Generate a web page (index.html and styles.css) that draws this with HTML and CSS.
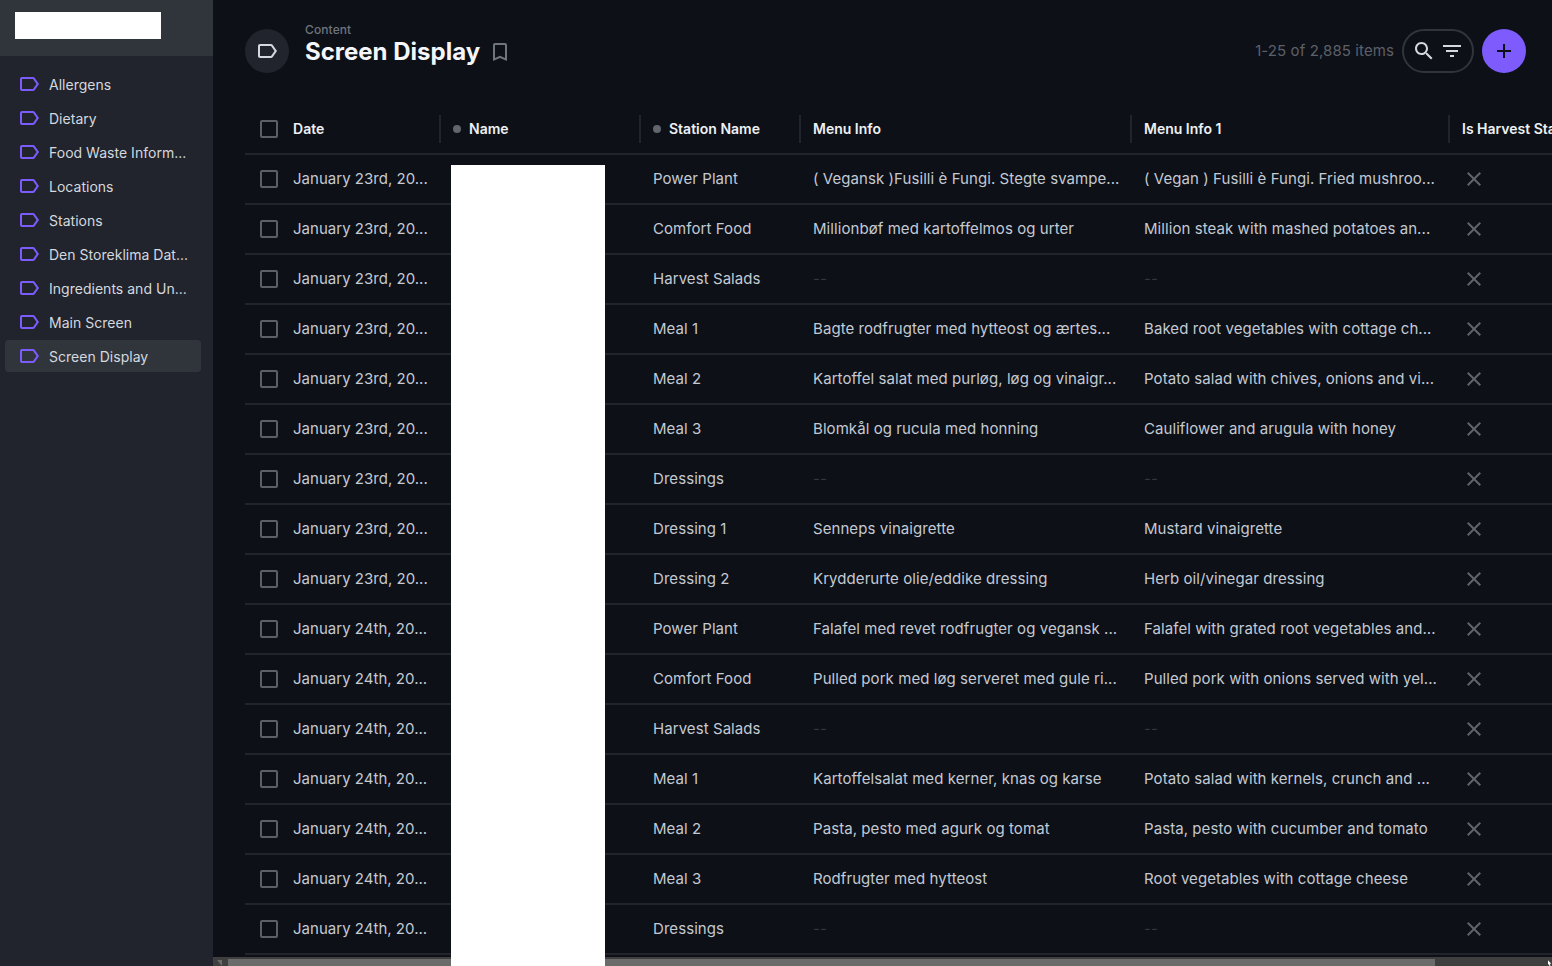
FILE: index.html
```html
<!DOCTYPE html>
<html lang="en">
<head>
<meta charset="utf-8">
<title>Screen Display</title>
<link rel="stylesheet" href="styles.css">
</head>
<body>
<svg class="defs" width="0" height="0" aria-hidden="true">
  <symbol id="i-label" viewBox="0 0 24 24"><path d="M17.63 5.84C17.27 5.33 16.67 5 16 5L5 5.01C3.9 5.01 3 5.9 3 7v10c0 1.1.9 1.99 2 1.99L16 19c.67 0 1.27-.33 1.63-.84L22 12l-4.37-6.16zM16 17H5V7h11l3.55 5L16 17z"/></symbol>
  <symbol id="i-close" viewBox="0 0 24 24"><path d="M19 6.41L17.59 5 12 10.59 6.41 5 5 6.41 10.59 12 5 17.59 6.41 19 12 13.41 17.59 19 19 17.59 13.41 12z"/></symbol>
</svg>
<div class="app">
  <aside class="sidebar">
    <div class="brand"><div class="logo"></div></div>
    <nav class="nav">
      <a class="nav-item"><svg class="nav-icon"><use href="#i-label"/></svg><span>Allergens</span></a>
      <a class="nav-item"><svg class="nav-icon"><use href="#i-label"/></svg><span>Dietary</span></a>
      <a class="nav-item"><svg class="nav-icon"><use href="#i-label"/></svg><span>Food Waste Inform...</span></a>
      <a class="nav-item"><svg class="nav-icon"><use href="#i-label"/></svg><span>Locations</span></a>
      <a class="nav-item"><svg class="nav-icon"><use href="#i-label"/></svg><span>Stations</span></a>
      <a class="nav-item"><svg class="nav-icon"><use href="#i-label"/></svg><span>Den Storeklima Dat...</span></a>
      <a class="nav-item"><svg class="nav-icon"><use href="#i-label"/></svg><span>Ingredients and Un...</span></a>
      <a class="nav-item"><svg class="nav-icon"><use href="#i-label"/></svg><span>Main Screen</span></a>
      <a class="nav-item active"><svg class="nav-icon"><use href="#i-label"/></svg><span>Screen Display</span></a>
    </nav>
  </aside>
  <main class="main">
    <header class="topbar">
      <div class="avatar"><svg class="avatar-icon"><use href="#i-label"/></svg></div>
      <div class="titles">
        <div class="crumb">Content</div>
        <div class="title-row">
          <h1 class="title">Screen Display</h1>
          <svg class="bookmark" viewBox="0 0 24 24"><path d="M17 3H7c-1.1 0-1.99.9-1.99 2L5 21l7-3 7 3V5c0-1.1-.9-2-2-2zm0 15l-5-2.18L7 18V5h10v13z"/></svg>
        </div>
      </div>
      <div class="actions">
        <span class="count">1-25 of 2,885 items</span>
        <div class="tools">
          <svg class="tool" viewBox="0 0 24 24"><path d="M15.5 14h-.79l-.28-.27C15.41 12.59 16 11.11 16 9.5 16 5.91 13.09 3 9.5 3S3 5.91 3 9.5 5.91 16 9.5 16c1.61 0 3.09-.59 4.23-1.57l.27.28v.79l5 4.99L20.49 19l-4.99-5zm-6 0C7.01 14 5 11.99 5 9.5S7.01 5 9.5 5 14 7.01 14 9.5 11.99 14 9.5 14z"/></svg>
          <svg class="tool" viewBox="0 0 24 24"><path d="M10 18h4v-2h-4v2zM3 6v2h18V6H3zm3 7h12v-2H6v2z"/></svg>
        </div>
        <button class="add"><svg class="add-icon" viewBox="0 0 24 24"><path d="M19 13h-6v6h-2v-6H5v-2h6V5h2v6h6v2z"/></svg></button>
      </div>
    </header>
    <section class="table-wrap">
      <div class="table">
        <div class="row head">
          <div class="cell c-date"><span class="check"></span><span>Date</span></div>
          <div class="cell c-name sep"><span class="dot"></span><span>Name</span></div>
          <div class="cell c-station sep"><span class="dot"></span><span>Station Name</span></div>
          <div class="cell sep"><span>Menu Info</span></div>
          <div class="cell sep"><span>Menu Info 1</span></div>
          <div class="cell sep"><span>Is Harvest Station</span></div>
        </div>
        <div class="row"><div class="cell c-date"><span class="check"></span><span>January 23rd, 20...</span></div><div class="cell"></div><div class="cell">Power Plant</div><div class="cell">( Vegansk )Fusilli è Fungi. Stegte svampe...</div><div class="cell">( Vegan ) Fusilli è Fungi. Fried mushroo...</div><div class="cell"><svg class="x"><use href="#i-close"/></svg></div></div>
        <div class="row"><div class="cell c-date"><span class="check"></span><span>January 23rd, 20...</span></div><div class="cell"></div><div class="cell">Comfort Food</div><div class="cell">Millionbøf med kartoffelmos og urter</div><div class="cell">Million steak with mashed potatoes an...</div><div class="cell"><svg class="x"><use href="#i-close"/></svg></div></div>
        <div class="row"><div class="cell c-date"><span class="check"></span><span>January 23rd, 20...</span></div><div class="cell"></div><div class="cell">Harvest Salads</div><div class="cell nil">--</div><div class="cell nil">--</div><div class="cell"><svg class="x"><use href="#i-close"/></svg></div></div>
        <div class="row"><div class="cell c-date"><span class="check"></span><span>January 23rd, 20...</span></div><div class="cell"></div><div class="cell">Meal 1</div><div class="cell">Bagte rodfrugter med hytteost og ærtes...</div><div class="cell">Baked root vegetables with cottage ch...</div><div class="cell"><svg class="x"><use href="#i-close"/></svg></div></div>
        <div class="row"><div class="cell c-date"><span class="check"></span><span>January 23rd, 20...</span></div><div class="cell"></div><div class="cell">Meal 2</div><div class="cell">Kartoffel salat med purløg, løg og vinaigr...</div><div class="cell">Potato salad with chives, onions and vi...</div><div class="cell"><svg class="x"><use href="#i-close"/></svg></div></div>
        <div class="row"><div class="cell c-date"><span class="check"></span><span>January 23rd, 20...</span></div><div class="cell"></div><div class="cell">Meal 3</div><div class="cell">Blomkål og rucula med honning</div><div class="cell">Cauliflower and arugula with honey</div><div class="cell"><svg class="x"><use href="#i-close"/></svg></div></div>
        <div class="row"><div class="cell c-date"><span class="check"></span><span>January 23rd, 20...</span></div><div class="cell"></div><div class="cell">Dressings</div><div class="cell nil">--</div><div class="cell nil">--</div><div class="cell"><svg class="x"><use href="#i-close"/></svg></div></div>
        <div class="row"><div class="cell c-date"><span class="check"></span><span>January 23rd, 20...</span></div><div class="cell"></div><div class="cell">Dressing 1</div><div class="cell">Senneps vinaigrette</div><div class="cell">Mustard vinaigrette</div><div class="cell"><svg class="x"><use href="#i-close"/></svg></div></div>
        <div class="row"><div class="cell c-date"><span class="check"></span><span>January 23rd, 20...</span></div><div class="cell"></div><div class="cell">Dressing 2</div><div class="cell">Krydderurte olie/eddike dressing</div><div class="cell">Herb oil/vinegar dressing</div><div class="cell"><svg class="x"><use href="#i-close"/></svg></div></div>
        <div class="row"><div class="cell c-date"><span class="check"></span><span>January 24th, 20...</span></div><div class="cell"></div><div class="cell">Power Plant</div><div class="cell">Falafel med revet rodfrugter og vegansk ...</div><div class="cell">Falafel with grated root vegetables and...</div><div class="cell"><svg class="x"><use href="#i-close"/></svg></div></div>
        <div class="row"><div class="cell c-date"><span class="check"></span><span>January 24th, 20...</span></div><div class="cell"></div><div class="cell">Comfort Food</div><div class="cell">Pulled pork med løg serveret med gule ri...</div><div class="cell">Pulled pork with onions served with yel...</div><div class="cell"><svg class="x"><use href="#i-close"/></svg></div></div>
        <div class="row"><div class="cell c-date"><span class="check"></span><span>January 24th, 20...</span></div><div class="cell"></div><div class="cell">Harvest Salads</div><div class="cell nil">--</div><div class="cell nil">--</div><div class="cell"><svg class="x"><use href="#i-close"/></svg></div></div>
        <div class="row"><div class="cell c-date"><span class="check"></span><span>January 24th, 20...</span></div><div class="cell"></div><div class="cell">Meal 1</div><div class="cell">Kartoffelsalat med kerner, knas og karse</div><div class="cell">Potato salad with kernels, crunch and ...</div><div class="cell"><svg class="x"><use href="#i-close"/></svg></div></div>
        <div class="row"><div class="cell c-date"><span class="check"></span><span>January 24th, 20...</span></div><div class="cell"></div><div class="cell">Meal 2</div><div class="cell">Pasta, pesto med agurk og tomat</div><div class="cell">Pasta, pesto with cucumber and tomato</div><div class="cell"><svg class="x"><use href="#i-close"/></svg></div></div>
        <div class="row"><div class="cell c-date"><span class="check"></span><span>January 24th, 20...</span></div><div class="cell"></div><div class="cell">Meal 3</div><div class="cell">Rodfrugter med hytteost</div><div class="cell">Root vegetables with cottage cheese</div><div class="cell"><svg class="x"><use href="#i-close"/></svg></div></div>
        <div class="row"><div class="cell c-date"><span class="check"></span><span>January 24th, 20...</span></div><div class="cell"></div><div class="cell">Dressings</div><div class="cell nil">--</div><div class="cell nil">--</div><div class="cell"><svg class="x"><use href="#i-close"/></svg></div></div>
      </div>
    </section>
    <div class="hscroll">
      <span class="arrow"></span>
      <div class="thumb"></div>
    </div>
    <div class="redact"></div>
    <svg class="cursor" viewBox="0 0 6 8"><path d="M0 0l5 5H2.5L4 8H2L.8 5.5 0 6.5z"/></svg>
  </main>
</div>
</body>
</html>
```

FILE: styles.css
```css
* { box-sizing: border-box; }
html, body { margin: 0; height: 100%; overflow: hidden; }
body {
  font-family: Inter, "Noto Sans", sans-serif;
  font-size: 14px;
  background: #0d1017;
  color: #c4cad3;
}
.defs { position: absolute; }
.app { display: flex; height: 966px; }

.sidebar { width: 213px; flex: none; background: #21242c; display: flex; flex-direction: column; }
.brand { height: 56px; background: #30353c; padding: 12px 0 0 15px; }
.logo { width: 146px; height: 27px; background: #fff; }
.nav { padding: 12px 12px 0 5px; display: flex; flex-direction: column; gap: 2px; }
.nav-item { height: 32px; display: flex; align-items: center; padding-left: 12px; gap: 8px; border-radius: 4px; color: #d4d8df; white-space: nowrap; letter-spacing: .02px; }
.nav-item.active { background: #30353c; }
.nav-icon { width: 24px; height: 24px; fill: #7c5cfc; flex: none; }

.main { flex: 1; min-width: 0; display: flex; flex-direction: column; position: relative; }
.topbar { height: 105px; flex: none; display: flex; align-items: flex-start; padding: 29px 26px 0 32px; }
.avatar { width: 44px; height: 44px; border-radius: 50%; background: #21242c; display: flex; align-items: center; justify-content: center; flex: none; }
.avatar-icon { width: 24px; height: 24px; fill: #d4d8df; }
.titles { margin-left: 16px; margin-top: -6px; }
.crumb { font-size: 12px; font-weight: 500; line-height: 14px; color: #6f747d; letter-spacing: .1px; }
.title-row { display: flex; align-items: center; gap: 10px; }
.title { margin: 0; font-size: 24px; line-height: 30px; font-weight: 700; color: #f4f6f9; }
.bookmark { width: 24px; height: 24px; fill: #6f747d; flex: none; margin-left: -2px; }
.actions { margin-left: auto; display: flex; align-items: center; }
.count { color: #5c6069; font-size: 15px; letter-spacing: .1px; margin-right: 8px; padding-bottom: 2px; }
.tools { width: 72px; height: 44px; border: 2px solid #30353c; border-radius: 22px; display: flex; align-items: center; padding-left: 8px; gap: 4px; }
.tool { width: 24px; height: 24px; fill: #d4d8df; flex: none; }
.add { width: 44px; height: 44px; margin-left: 8px; border: 0; padding: 0; border-radius: 50%; background: #7e5bfd; display: flex; align-items: center; justify-content: center; }
.add-icon { width: 24px; height: 24px; fill: #0d1017; }

.table-wrap { flex: 1; min-height: 0; overflow: hidden; padding-left: 32px; }
.table { width: 1400px; }
.row { display: grid; grid-template-columns: 195px 200px 160px 331px 318px 196px; height: 50px; align-items: center; border-bottom: 2px solid #21242c; font-size: 15px; letter-spacing: .07px; }
.cell { display: flex; align-items: center; padding-left: 13px; padding-bottom: 2px; white-space: nowrap; overflow: hidden; }
.c-date { padding-left: 15px; gap: 15px; letter-spacing: .02px; }
.head { font-size: 14px; letter-spacing: 0; }
.head .cell { font-weight: 600; color: #eef0f4; height: 28px; }
.head .sep { border-left: 2px solid #21242c; margin-left: -1px; padding-left: 12px; }
.head .c-name, .head .c-station { gap: 8px; }
.check { width: 18px; height: 18px; margin-top: 2px; border: 2px solid #5b5f67; border-radius: 2px; flex: none; }
.dot { width: 8px; height: 8px; margin-top: 2px; border-radius: 50%; background: #62656e; flex: none; }
.nil { color: #32363e; }
.x { width: 24px; height: 24px; margin-top: 2px; fill: #5f636b; flex: none; }

.hscroll { height: 9px; flex: none; background: #3f3f3f; padding-top: 2px; display: flex; align-items: stretch; }
.arrow { width: 15px; flex: none; position: relative; }
.arrow::after { content: ""; position: absolute; left: 4px; bottom: 0; border-style: solid; border-width: 0 5px 6px 0; border-color: transparent #6b6b6b transparent transparent; }
.thumb { width: 1207px; background: #6b6b6b; }

.redact { position: absolute; left: 238px; top: 165px; bottom: 0; width: 154px; background: #fff; }
.cursor { position: absolute; right: 0; bottom: 0; width: 4px; height: 6px; fill: #fff; }
```
